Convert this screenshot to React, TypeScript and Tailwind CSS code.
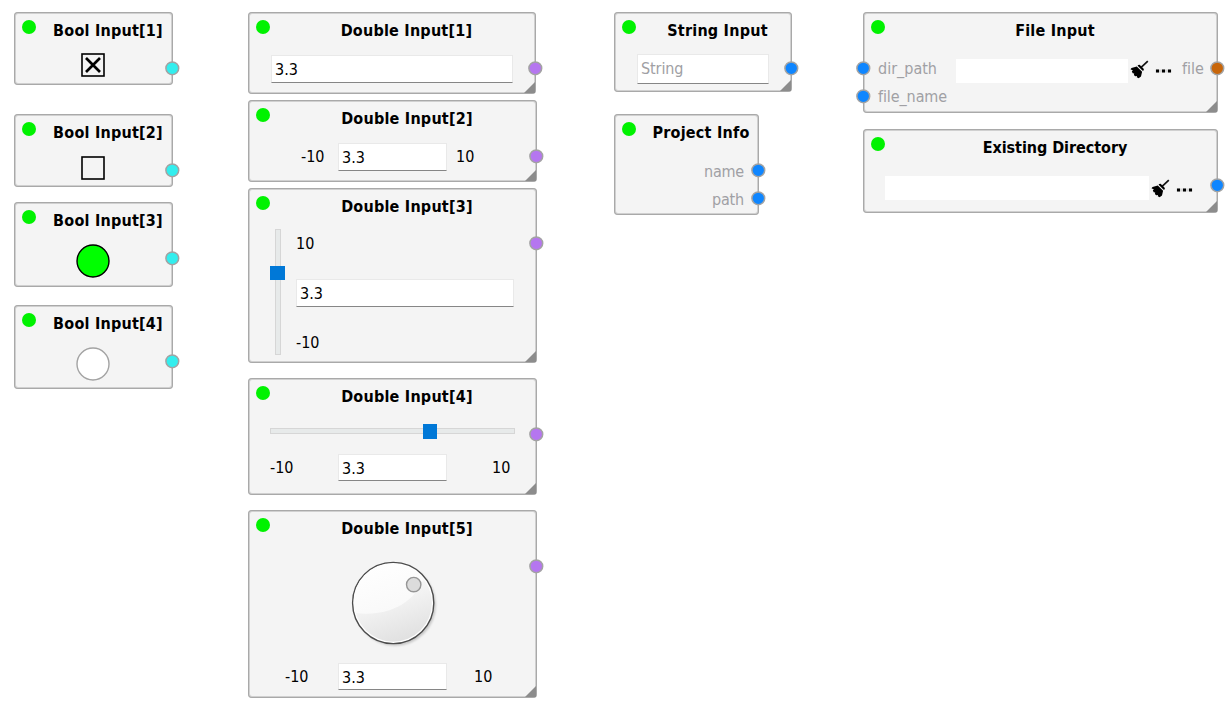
import type { ReactNode } from "react";
import clsx from "clsx";

type PortProps = { className: string };

function Port({ className }: PortProps) {
  return (
    <svg className={clsx("absolute size-[15px]", className)} viewBox="0 0 15 15">
      <circle cx="7.3" cy="7.3" r="6.4" fill="currentColor" stroke="#a3a3a3" strokeWidth="1.5" />
    </svg>
  );
}

type NodeProps = { title: string; className: string; titleClass?: string; resizable?: boolean; children?: ReactNode };

function Node({ title, className, titleClass, resizable, children }: NodeProps) {
  return (
    <section
      className={clsx(
        "absolute flex flex-col rounded-[4px] bg-[#f4f4f4] shadow-[inset_0_0_0_1px_#a9a9a9,inset_0_0_0_2px_#d0d0d0]",
        className,
      )}
    >
      <span className="absolute left-[8px] top-[8px] size-[13.5px] rounded-full bg-[#00f200]" />
      <h2
        className={clsx(
          "h-9 shrink-0 whitespace-nowrap pl-[29px] text-center text-base leading-[38px] font-bold",
          titleClass ?? "tracking-[0.22px]",
        )}
      >
        {title}
      </h2>
      {children}
      {resizable && (
        <svg className="absolute right-[1px] bottom-[1px] size-[11px]" viewBox="0 0 11 11">
          <path d="M11 0V11H0Z" fill="#8c8c8c" />
        </svg>
      )}
    </section>
  );
}

function Field({ value, className }: { value: string; className: string }) {
  return (
    <div
      className={clsx(
        "shrink-0 border border-[#e9e9e9] border-b-[#868686] bg-white pl-[3px] leading-[27px]",
        className,
      )}
    >
      {value}
    </div>
  );
}

function FilePicker({ className }: { className: string }) {
  return (
    <>
      <div className={clsx("h-6 shrink-0 bg-white", className)} />
      <svg className="ml-[2px] h-[19px] w-[19px] shrink-0" viewBox="0 0 19 19">
        <path d="M17.8 1.2L11.4 7.2" stroke="#111" strokeWidth="1.7" />
        <path d="M8.2 5L9.6 4.8L13.9 8.9L13.6 10.4L12.6 10.8L7.6 5.8Z" fill="#000" />
        <path
          d="M6.8 6.6L12.1 11.7L11 16.4L8.6 18.2L6.8 17.3L7 15.9L5.2 16.2L3.9 14.9L4.2 13.4L2.7 13.2L1.8 11.3L3 10.4L0.5 9.2L1.5 8.1Z"
          fill="#000"
        />
      </svg>
      <svg className="mt-[3px] ml-[6px] h-[4px] w-[17px] shrink-0" viewBox="0 0 17 4">
        <path d="M0.5 .5h16v3h-16z" fill="#d6d6d6" />
        <path d="M1 .5h3v3h-3zM7 .5h3v3h-3zM13 .5h3v3h-3z" fill="#000" />
      </svg>
    </>
  );
}

function Dial() {
  return (
    <svg className="h-[92px] w-[92px]" viewBox="0 0 92 92">
      <defs>
        <linearGradient id="dialFace" x1="0.3" y1="0" x2="0.65" y2="1">
          <stop offset="0" stopColor="#fcfcfc" />
          <stop offset="0.45" stopColor="#f4f4f4" />
          <stop offset="1" stopColor="#e0e0e0" />
        </linearGradient>
        <linearGradient id="dialShine" x1="0" y1="0" x2="0.5" y2="1">
          <stop offset="0" stopColor="#ffffff" />
          <stop offset="1" stopColor="#f9f9f9" />
        </linearGradient>
        <filter id="dialShadow" x="-10%" y="-10%" width="125%" height="125%">
          <feGaussianBlur stdDeviation="1.3" />
        </filter>
      </defs>
      <circle cx="48" cy="48" r="40.8" fill="#c6c6c6" filter="url(#dialShadow)" />
      <circle cx="46.2" cy="46" r="40.6" fill="#fff" stroke="#4c4c4c" strokeWidth="1.4" />
      <circle cx="46.2" cy="46" r="38.7" fill="url(#dialFace)" />
      <path d="M8.2 56A38.7 38.7 0 0 1 76.7 22.5C66 46 42 60 8.2 56Z" fill="url(#dialShine)" />
      <circle cx="66.7" cy="27.6" r="7.2" fill="#dcdcdc" stroke="#969696" strokeWidth="1.4" />
    </svg>
  );
}

export default function App() {
  return (
    <main className="relative h-[709px] w-[1229px] overflow-hidden bg-white font-['DejaVu_Sans_Condensed','DejaVu_Sans',sans-serif] text-base text-black [font-stretch:condensed] [font-variant-ligatures:none]">
      <Node title="Bool Input[1]" className="left-[14px] top-[12px] h-[73px] w-[159px]">
        <svg className="mt-[5px] mr-px size-6 self-center" viewBox="0 0 24 24">
          <rect x="1" y="1" width="22" height="22" fill="none" stroke="#000" strokeWidth="1.6" />
          <path d="M5 5L19 19M19 5L5 19" stroke="#000" strokeWidth="2.7" />
        </svg>
        <Port className="right-[-7px] top-[49px] text-[#33eeee]" />
      </Node>
      <Node title="Bool Input[2]" className="left-[14px] top-[114px] h-[73px] w-[159px]">
        <svg className="mt-[6px] mr-px size-6 self-center" viewBox="0 0 24 24">
          <rect x="1" y="1" width="22" height="22" fill="none" stroke="#000" strokeWidth="1.6" />
        </svg>
        <Port className="right-[-7px] top-[49px] text-[#33eeee]" />
      </Node>
      <Node title="Bool Input[3]" className="left-[14px] top-[202px] h-[85px] w-[159px]">
        <svg className="mt-[6px] mr-px size-[34px] self-center" viewBox="0 0 34 34">
          <circle cx="17" cy="17" r="16" fill="#00ff00" stroke="#000" strokeWidth="1.4" />
        </svg>
        <Port className="right-[-7px] top-[49px] text-[#33eeee]" />
      </Node>
      <Node title="Bool Input[4]" className="left-[14px] top-[305px] h-[84px] w-[159px]">
        <svg className="mt-[6px] mr-px size-[34px] self-center" viewBox="0 0 34 34">
          <circle cx="17" cy="17" r="16" fill="#fff" stroke="#a3a3a3" strokeWidth="1.4" />
        </svg>
        <Port className="right-[-7px] top-[49px] text-[#33eeee]" />
      </Node>

      <Node title="Double Input[1]" resizable className="left-[248px] top-[12px] h-[82px] w-[288px]">
        <div className="flex pt-[7px] pl-[23px]">
          <Field value="3.3" className="h-[28px] w-[242px]" />
        </div>
        <Port className="right-[-7px] top-[49px] text-[#b576ef]" />
      </Node>
      <Node title="Double Input[2]" resizable className="left-[248px] top-[100px] h-[82px] w-[289px]">
        <div className="flex items-center pt-[7px] pl-[53px]">
          <span className="w-[37px]">-10</span>
          <Field value="3.3" className="h-[28px] w-[109px]" />
          <span className="ml-[9px]">10</span>
        </div>
        <Port className="right-[-7px] top-[49px] text-[#b576ef]" />
      </Node>
      <Node title="Double Input[3]" resizable className="left-[248px] top-[188px] h-[175px] w-[289px]">
        <div className="mt-[5px] flex h-[126px] pl-[22px]">
          <div className="flex w-[15px] flex-col items-center">
            <div className="h-[37px] w-[6px] border border-b-0 border-[#d6d6d6] bg-[#e7eaea]" />
            <div className="h-[14px] w-[15px] bg-[#0078d7]" />
            <div className="w-[6px] flex-1 border border-t-0 border-[#d6d6d6] bg-[#e7eaea]" />
          </div>
          <div className="flex flex-col pl-[11px]">
            <span className="mt-[3px] h-6 leading-6">10</span>
            <Field value="3.3" className="mt-[23px] h-[28px] w-[218px]" />
            <span className="mt-[24px] h-6 leading-6">-10</span>
          </div>
        </div>
        <Port className="right-[-7px] top-[48px] text-[#b576ef]" />
      </Node>
      <Node title="Double Input[4]" resizable className="left-[248px] top-[378px] h-[117px] w-[289px]">
        <div className="mt-[10px] ml-[22px] flex h-[15px] w-[245px] items-start">
          <div className="mt-1 h-[6px] w-[153px] border border-r-0 border-[#d6d6d6] bg-[#e7eaea]" />
          <div className="h-[15px] w-[14px] bg-[#0078d7]" />
          <div className="mt-1 h-[6px] flex-1 border border-l-0 border-[#d6d6d6] bg-[#e7eaea]" />
        </div>
        <div className="mt-[15px] flex items-center pl-[22px]">
          <span className="w-[68px]">-10</span>
          <Field value="3.3" className="h-[27px] w-[109px]" />
          <span className="ml-[45px]">10</span>
        </div>
        <Port className="right-[-7px] top-[49px] text-[#b576ef]" />
      </Node>
      <Node title="Double Input[5]" resizable className="left-[248px] top-[510px] h-[188px] w-[289px]">
        <div className="mt-[11px] ml-[99px] h-[92px]">
          <Dial />
        </div>
        <div className="mt-[14px] flex items-center pl-[37px]">
          <span className="w-[53px]">-10</span>
          <Field value="3.3" className="h-[27px] w-[109px]" />
          <span className="ml-[27px]">10</span>
        </div>
        <Port className="right-[-7px] top-[49px] text-[#b576ef]" />
      </Node>

      <Node title="String Input" resizable className="left-[614px] top-[12px] h-[80px] w-[178px]">
        <div className="flex pt-[6px] pl-[23px]">
          <Field value="String" className="h-[30px] w-[132px] tracking-[-0.1px] text-[#a0a0a4]" />
        </div>
        <Port className="right-[-7px] top-[49px] text-[#0f86ff]" />
      </Node>
      <Node title="Project Info" className="left-[614px] top-[114px] h-[101px] w-[145px]">
        <div className="mt-[8px] flex flex-col pr-[15px] text-right leading-7 tracking-[-0.2px] text-[#a0a0a4]">
          <span>name</span>
          <span>path</span>
        </div>
        <Port className="right-[-7px] top-[49px] text-[#0f86ff]" />
        <Port className="right-[-7px] top-[77px] text-[#0f86ff]" />
      </Node>

      <Node title="File Input" resizable className="left-[863px] top-[12px] h-[101px] w-[355px]">
        <div className="mt-[7px] flex h-7 items-center pl-[15px] leading-7 text-[#a0a0a4]">
          <span className="w-[78px]">dir_path</span>
          <FilePicker className="mt-[3px] w-[172px]" />
          <span className="ml-[10px]">file</span>
        </div>
        <span className="pl-[15px] leading-7 tracking-[-0.1px] text-[#a0a0a4]">file_name</span>
        <Port className="left-[-7px] top-[49px] text-[#0f86ff]" />
        <Port className="left-[-7px] top-[77px] text-[#0f86ff]" />
        <Port className="right-[-7px] top-[49px] text-[#c8660a]" />
      </Node>
      <Node
        title="Existing Directory"
        resizable
        titleClass="tracking-[-0.05px]"
        className="left-[863px] top-[129px] h-[84px] w-[355px]"
      >
        <div className="mt-[9px] flex h-7 items-center pl-[22px]">
          <FilePicker className="w-[264px]" />
        </div>
        <Port className="right-[-7px] top-[49px] text-[#0f86ff]" />
      </Node>
    </main>
  );
}
